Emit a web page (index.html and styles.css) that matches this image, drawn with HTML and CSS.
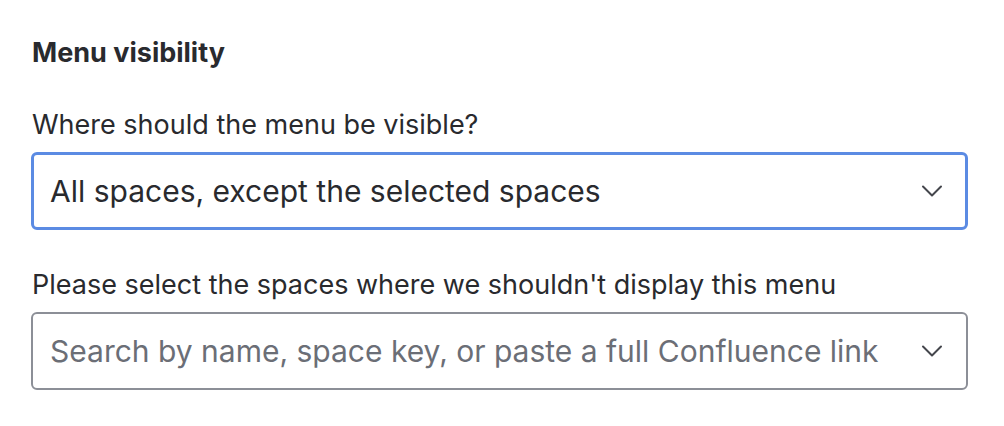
FILE: index.html
```html
<!DOCTYPE html>
<html>
<head>
<meta charset="utf-8">
<link rel="stylesheet" href="styles.css">
</head>
<body>
<div class="panel">
  <h2 class="heading">Menu visibility</h2>
  <div class="field">
    <label class="label">Where should the menu be visible?</label>
    <div class="select select-focused">
      <span class="value">All spaces, except the selected spaces</span>
      <svg class="chevron" width="24" height="24" viewBox="0 0 24 24"><path d="M3 7.5 L12 16.5 L21 7.5" fill="none" stroke="#44464c" stroke-width="2" stroke-linecap="round" stroke-linejoin="round"/></svg>
    </div>
  </div>
  <div class="field">
    <label class="label">Please select the spaces where we shouldn't display this menu</label>
    <div class="select">
      <span class="placeholder">Search by name, space key, or paste a full Confluence link</span>
      <svg class="chevron" width="24" height="24" viewBox="0 0 24 24"><path d="M3 7.5 L12 16.5 L21 7.5" fill="none" stroke="#44464c" stroke-width="2" stroke-linecap="round" stroke-linejoin="round"/></svg>
    </div>
  </div>
</div>
</body>
</html>
```

FILE: styles.css
```css
html, body {
  margin: 0;
  padding: 0;
  background: #ffffff;
}
body {
  font-family: Inter, "Noto Sans", sans-serif;
  color: #172b4d;
}
.panel {
  padding: 37px 36px 0 31px;
  display: flex;
  flex-direction: column;
}
.heading {
  margin: 0 0 39px 1px;
  font-size: 27px;
  font-weight: 700;
  color: #292a2e;
  line-height: 32px;
}
.field {
  display: flex;
  flex-direction: column;
  margin-bottom: 38px;
}
.label {
  margin: 0 0 10px 1px;
  font-size: 27px;
  line-height: 34px;
  color: #292a2e;
}
.select {
  box-sizing: border-box;
  height: 78px;
  border: 2px solid #8c8f97;
  border-radius: 6px;
  display: flex;
  align-items: center;
  padding: 0 22px 0 17px;
}
.select-focused {
  border: 3px solid #5b8be3;
  padding-left: 16px;
  padding-right: 21px;
}
.value {
  flex: 1;
  font-size: 30px;
  color: #292a2e;
}
.placeholder {
  flex: 1;
  font-size: 30px;
  color: #6b6e76;
}
.chevron {
  flex: none;
}
```
